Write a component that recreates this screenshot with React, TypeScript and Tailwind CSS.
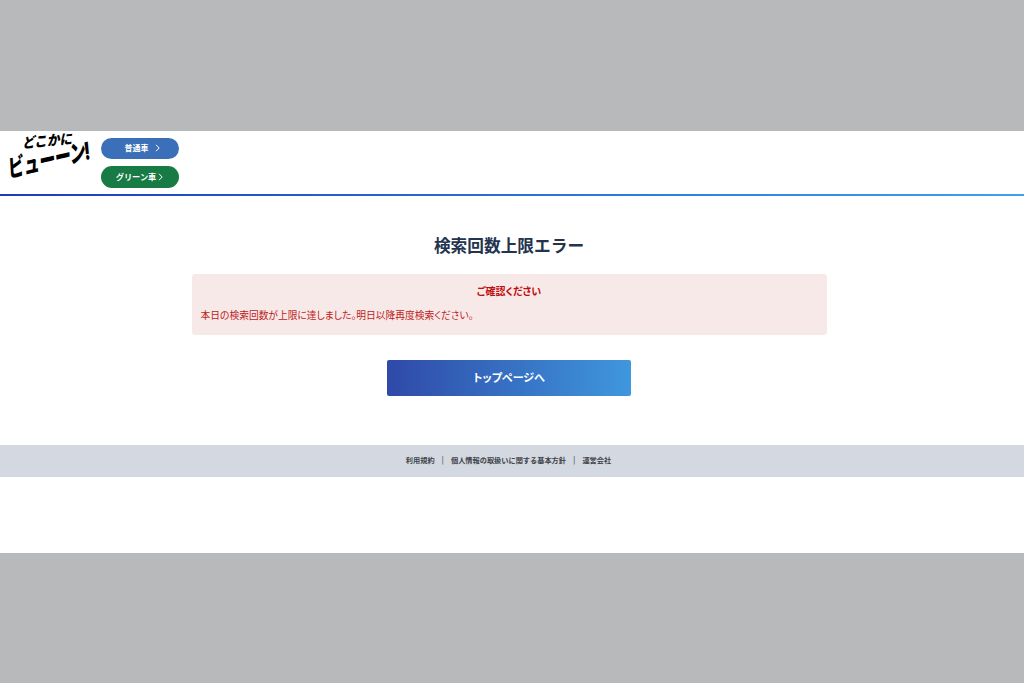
export default function App() {
  const font = { fontFamily: '"Inter","Noto Sans CJK JP",sans-serif' };
  return (
    <div style={font} className="flex h-[683px] w-[1024px] flex-col overflow-hidden bg-[#b8b9bb]">
      <div className="h-[131px] shrink-0" />
      <div className="flex h-[422px] shrink-0 flex-col bg-white">
        <header className="flex h-[63px] shrink-0 gap-[9px] pl-[6px]">
          <div className="relative h-[63px] w-[86px] shrink-0 font-black italic leading-none text-black">
            <span className="absolute left-[16px] top-[5px] origin-left -rotate-[5deg] scale-x-[0.9] whitespace-nowrap text-[14px]">どこかに</span>
            <span className="absolute left-[1px] top-[27px] origin-left -rotate-[13deg] scale-x-[0.68] whitespace-nowrap text-[24px] tracking-[-0.5px]">ビューーン!</span>
          </div>
          <div className="flex flex-col gap-[7px] pt-[6.5px]">
            <div className="flex h-[21.5px] w-[78px] items-center justify-center gap-[6px] rounded-full bg-[#3b6fb8] pl-[4px] text-[8px] font-semibold text-white">
              普通車
              <svg width="5" height="8" viewBox="0 0 5 8" fill="none" stroke="white" strokeWidth="1"><path d="M1 .8 4.2 4 1 7.2" /></svg>
            </div>
            <div className="flex h-[21.5px] w-[78px] items-center justify-center gap-[2px] rounded-full bg-[#187a45] pr-[1px] text-[8.2px] font-semibold text-white">
              グリーン車
              <svg width="5" height="8" viewBox="0 0 5 8" fill="none" stroke="white" strokeWidth="1"><path d="M1 .8 4.2 4 1 7.2" /></svg>
            </div>
          </div>
        </header>
        <div className="h-[2px] shrink-0 bg-gradient-to-r from-[#2038c0] to-[#40a0f0]" />
        <main className="flex h-[249px] shrink-0 flex-col items-center pr-[6px]">
          <h1 className="mt-[38px] h-[24px] text-[16.7px] font-bold leading-[24px] text-[#24344f]">検索回数上限エラー</h1>
          <div className="mt-[16px] h-[61px] w-[635px] rounded-[3px] bg-[#f7e9e8] px-[9px] pt-[10px] text-[#bd1a1a] [font-feature-settings:'palt']">
            <p className="text-center text-[10px] font-bold leading-[14px] text-[#c00d0d]">ご確認ください</p>
            <p className="mt-[11px] text-[9.75px] leading-[14px]">本日の検索回数が上限に達しました。明日以降再度検索ください。</p>
          </div>
          <div className="mt-[25px] flex h-[36px] w-[244px] items-center justify-center rounded-[2px] bg-gradient-to-r from-[#2f49a8] to-[#3f97dd] text-[11px] font-semibold text-white [font-feature-settings:'palt']">
            トップページへ
          </div>
        </main>
        <footer className="flex h-[32px] shrink-0 items-center justify-center gap-[7px] bg-[#d4d8e0] pr-[7px] text-[7.2px] font-semibold text-[#3e434b]">
          <span>利用規約</span>
          <span className="font-normal">|</span>
          <span>個人情報の取扱いに関する基本方針</span>
          <span className="font-normal">|</span>
          <span>運営会社</span>
        </footer>
      </div>
    </div>
  );
}
